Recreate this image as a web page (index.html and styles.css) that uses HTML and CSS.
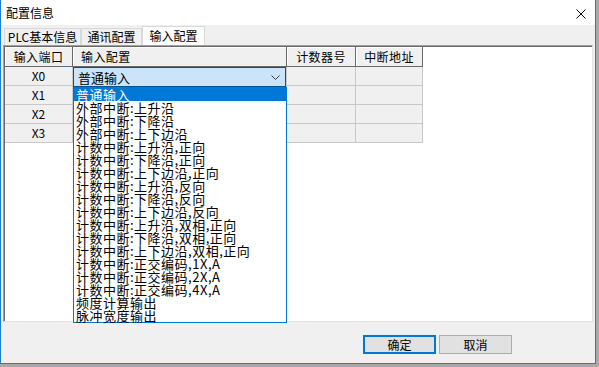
FILE: index.html
```html
<!DOCTYPE html>
<html lang="zh-CN">
<head>
<meta charset="utf-8">
<title>配置信息</title>
<link rel="stylesheet" href="styles.css">
</head>
<body>
<div class="window">
  <div class="titlebar">
    <span class="title">配置信息</span>
    <svg class="close" width="10" height="10" viewBox="0 0 10 10"><path d="M0.5 0.5 L9.5 9.5 M9.5 0.5 L0.5 9.5" stroke="#000" stroke-width="1" fill="none"/></svg>
  </div>
  <div class="content">
    <div class="tabs">
      <div class="tab t1">PLC基本信息</div>
      <div class="tab t2">通讯配置</div>
      <div class="tab t3 active">输入配置</div>
    </div>
    <div class="panel">
      <div class="grid">
        <div class="hc">输入端口</div>
        <div class="hc left">输入配置</div>
        <div class="hc">计数器号</div>
        <div class="hc">中断地址</div>

        <div class="c">X0</div>
        <div class="c combo-cell">
          <div class="combo"><span>普通输入</span><svg width="9" height="5" viewBox="0 0 9 5"><path d="M0.5 0.5 L4.5 4.5 L8.5 0.5" stroke="#3a3a3a" stroke-width="1" fill="none"/></svg></div>
        </div>
        <div class="c"></div>
        <div class="c"></div>

        <div class="c">X1</div>
        <div class="c"></div>
        <div class="c"></div>
        <div class="c"></div>

        <div class="c">X2</div>
        <div class="c"></div>
        <div class="c"></div>
        <div class="c"></div>

        <div class="c">X3</div>
        <div class="c"></div>
        <div class="c"></div>
        <div class="c"></div>
      </div>
      <div class="dropdown">
        <div class="item sel">普通输入</div>
        <div class="item">外部中断:上升沿</div>
        <div class="item">外部中断:下降沿</div>
        <div class="item">外部中断:上下边沿</div>
        <div class="item">计数中断:上升沿,正向</div>
        <div class="item">计数中断:下降沿,正向</div>
        <div class="item">计数中断:上下边沿,正向</div>
        <div class="item">计数中断:上升沿,反向</div>
        <div class="item">计数中断:下降沿,反向</div>
        <div class="item">计数中断:上下边沿,反向</div>
        <div class="item">计数中断:上升沿,双相,正向</div>
        <div class="item">计数中断:下降沿,双相,正向</div>
        <div class="item">计数中断:上下边沿,双相,正向</div>
        <div class="item">计数中断:正交编码,1X,A</div>
        <div class="item">计数中断:正交编码,2X,A</div>
        <div class="item">计数中断:正交编码,4X,A</div>
        <div class="item">频度计算输出</div>
        <div class="item">脉冲宽度输出</div>
      </div>
    </div>
    <div class="buttons">
      <div class="btn default">确定</div>
      <div class="btn">取消</div>
    </div>
  </div>
</div>
</body>
</html>
```
FILE: styles.css
```css
html, body {
  margin: 0;
  padding: 0;
}
body {
  width: 599px;
  height: 367px;
  background: #a9a9a9;
  font-family: "Noto Sans CJK SC", "Noto Sans", sans-serif;
  font-size: 12px;
  color: #000;
  overflow: hidden;
}
.window {
  width: 596px;
  height: 364px;
  box-sizing: border-box;
  border: 1px solid #1c7fd6;
  border-top: none;
  background: #f0f0f0;
  display: flex;
  flex-direction: column;
}
.titlebar {
  height: 25px;
  flex: none;
  background: #fff;
  display: flex;
  align-items: center;
  justify-content: space-between;
  padding: 1px 9px 0 5px;
  box-sizing: border-box;
}
.title {
  line-height: 12px;
}
.close {
  display: block;
  margin-top: 2px;
}
.content {
  flex: 1;
  display: flex;
  flex-direction: column;
  padding: 1px 0 0 2px;
}
.tabs {
  display: flex;
  align-items: flex-end;
  height: 19px;
  margin-left: 1px;
}
.tab {
  height: 17px;
  box-sizing: border-box;
  border: 1px solid #d9d9d9;
  border-bottom: none;
  background: #f0f0f0;
  display: flex;
  align-items: center;
  justify-content: center;
  line-height: 12px;
  white-space: nowrap;
}
.t1 { width: 77px; }
.t2 { width: 61px; }
.t3 { width: 63px; }
.tab.active {
  height: 19px;
  background: #fff;
  padding-bottom: 1px;
}
.panel {
  position: relative;
  width: 590px;
  height: 277px;
  box-sizing: border-box;
  border-style: solid;
  border-width: 1px;
  border-color: #a0a0a0 #e3e3e3 #e3e3e3 #a0a0a0;
  box-shadow: inset 1px 1px 0 #696969;
  padding: 1px 0 0 1px;
  background: #fff;
}
.grid {
  display: grid;
  grid-template-columns: 68px 214px 69px 67px;
  grid-template-rows: 20px repeat(4, 19px);
  width: 418px;
}
.hc {
  box-sizing: border-box;
  border-right: 1px solid #696969;
  border-bottom: 1px solid #696969;
  box-shadow: inset 1px 1px 0 #fff;
  background: #f0f0f0;
  display: flex;
  align-items: center;
  justify-content: center;
  line-height: 12px;
  letter-spacing: 0.4px;
  white-space: nowrap;
}
.hc.left {
  justify-content: flex-start;
  padding-left: 8px;
}
.c {
  box-sizing: border-box;
  border-right: 1px solid #c8c8c8;
  border-bottom: 1px solid #c8c8c8;
  background: #f0f0f0;
  display: flex;
  align-items: center;
  justify-content: center;
  line-height: 12px;
}
.combo-cell {
  align-items: flex-start;
  justify-content: flex-start;
}
.combo {
  position: relative;
  z-index: 1;
  width: 213px;
  height: 20px;
  flex: none;
  box-sizing: border-box;
  border: 1px solid #005499;
  background: #cce4f7;
  display: flex;
  align-items: center;
  justify-content: space-between;
  padding: 0 5px 0 4px;
  font-size: 13px;
  line-height: 13px;
}
.combo svg {
  display: block;
}
.dropdown {
  position: absolute;
  left: 69px;
  top: 41px;
  z-index: 2;
  width: 214px;
  height: 236px;
  box-sizing: border-box;
  border: 1px solid #0078d7;
  background: #fff;
  font-size: 13px;
  line-height: 13px;
}
.item {
  height: 13px;
  padding-left: 2px;
  white-space: nowrap;
  letter-spacing: 0.5px;
}
.item.sel {
  background: #0078d7;
  color: #fff;
}
.buttons {
  display: flex;
  justify-content: flex-end;
  gap: 3px;
  padding-right: 83px;
  margin-top: 13px;
}
.btn {
  width: 73px;
  height: 19px;
  box-sizing: border-box;
  border: 1px solid #adadad;
  background: #e1e1e1;
  display: flex;
  align-items: center;
  justify-content: center;
  line-height: 12px;
}
.btn.default {
  border: 2px solid #0078d7;
}
```
